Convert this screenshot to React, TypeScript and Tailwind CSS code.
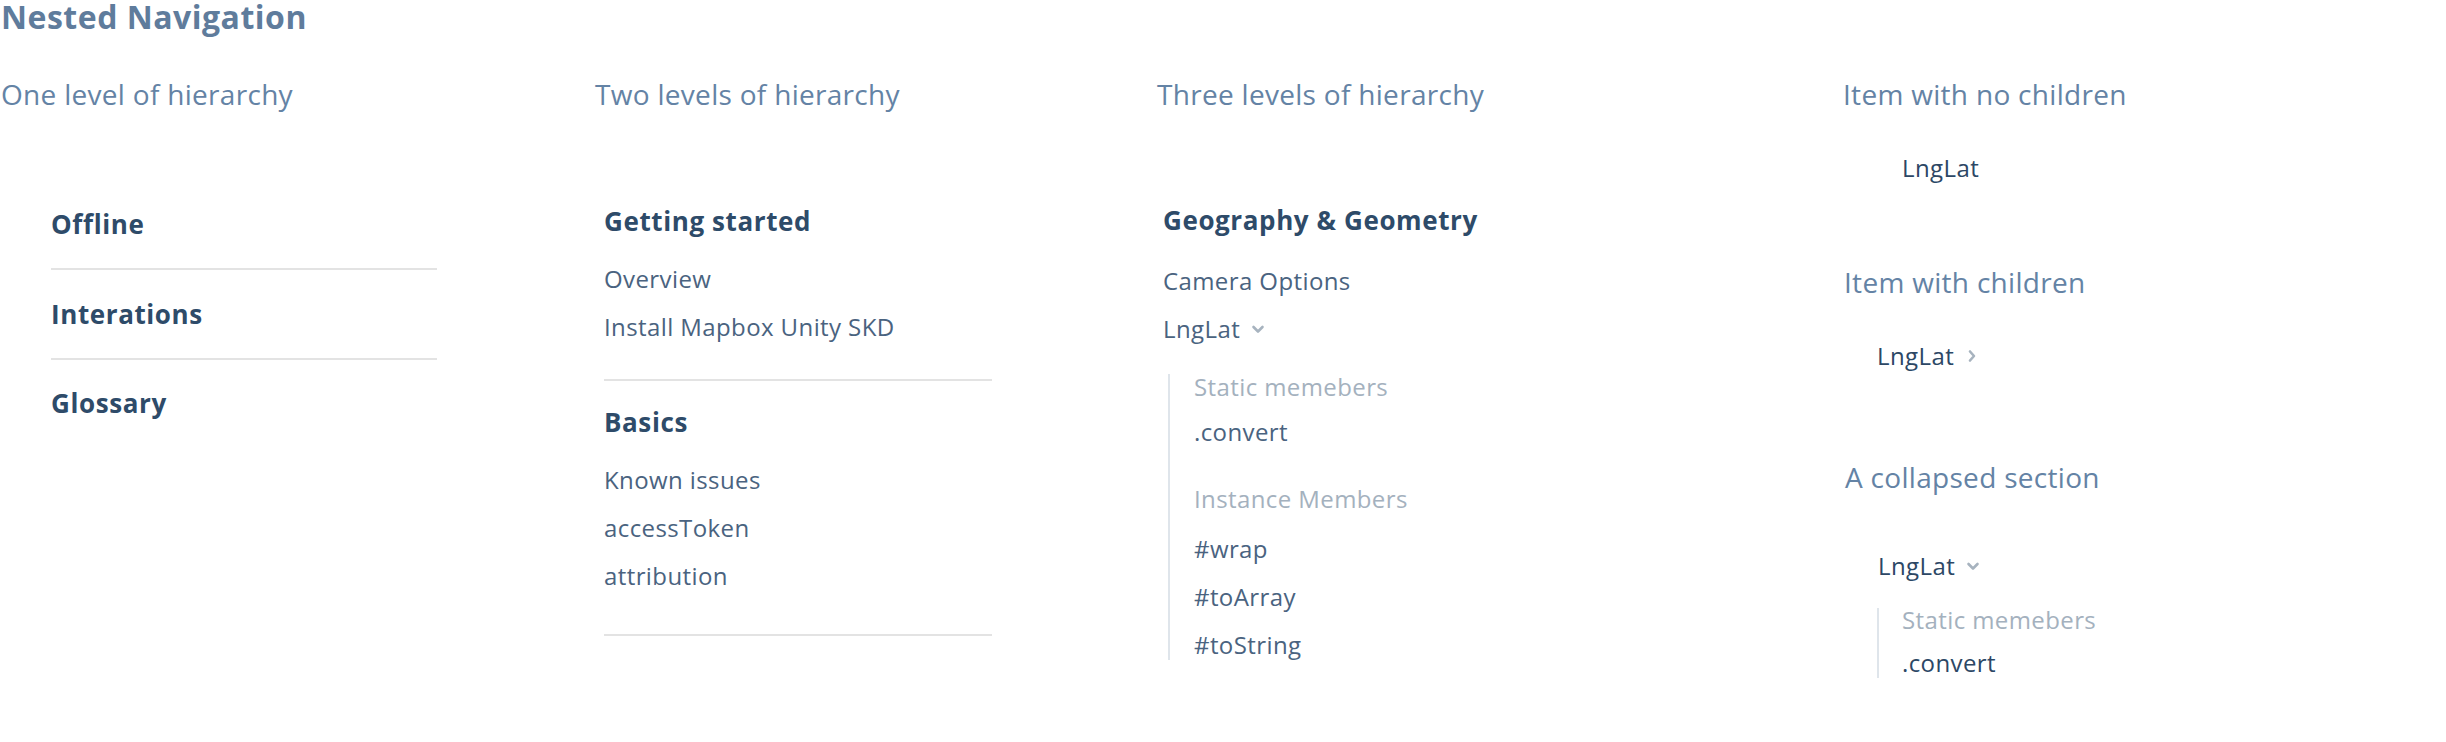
import React from "react";

function ChevronDown() {
  return (
    <svg width="16" height="16" viewBox="0 0 16 16" className="text-[#a7b3bf]">
      <polyline points="3.5,6 8,10.5 12.5,6" fill="none" stroke="currentColor" strokeWidth="2.6" strokeLinecap="round" strokeLinejoin="round" />
    </svg>
  );
}

function ChevronRight() {
  return (
    <svg width="12" height="16" viewBox="0 0 12 16" className="text-[#a7b3bf]">
      <polyline points="4,3.5 8,8 4,12.5" fill="none" stroke="currentColor" strokeWidth="2.6" strokeLinecap="round" strokeLinejoin="round" />
    </svg>
  );
}

function Subtitle({ children, className = "" }: { children: React.ReactNode; className?: string }) {
  return (
    <div className={`h-[28px] text-[28px] leading-[28px] tracking-[0.3px] text-[#6483a5] whitespace-nowrap ${className}`}>
      {children}
    </div>
  );
}

const heading = "h-[27px] text-[26px] leading-[27px] tracking-[0.6px] font-bold text-[#2e4b69] whitespace-nowrap";
const item = "h-[48px] flex items-center text-[24px] tracking-[0.4px] text-[#4a6380] whitespace-nowrap";
const sub = "h-[30px] flex items-center text-[24px] tracking-[0.4px] text-[#4a6380] whitespace-nowrap";
const muted = "flex items-center text-[24px] tracking-[0.4px] text-[#a4b1be] whitespace-nowrap";
const dark = "h-[30px] flex items-center text-[24px] tracking-[0.4px] text-[#2c4765] whitespace-nowrap";

export default function App() {
  return (
    <div className="w-[2446px] h-[742px] bg-white font-['Open_Sans',sans-serif] overflow-hidden">
      <h1 className="pt-[1px] pl-[1px] text-[32px] leading-[32px] tracking-[0.5px] font-bold text-[#5f7c9c] whitespace-nowrap">
        Nested Navigation
      </h1>

      <div className="mt-[47px] grid grid-cols-[595px_562px_684px_1fr]">
        {/* One level */}
        <div>
          <Subtitle className="pl-[1px]">One level of hierarchy</Subtitle>
          <div className="mt-[72px] ml-[51px] w-[386px] flex flex-col">
            <div className="h-[90px] flex items-center border-b-2 border-[#e3e3e3]">
              <span className={heading}>Offline</span>
            </div>
            <div className="h-[90px] flex items-center border-b-2 border-[#e3e3e3]">
              <span className={heading}>Interations</span>
            </div>
            <div className="h-[86px] flex items-center">
              <span className={heading}>Glossary</span>
            </div>
          </div>
        </div>

        {/* Two levels */}
        <div>
          <Subtitle>Two levels of hierarchy</Subtitle>
          <div className="mt-[72px] ml-[9px] w-[388px] flex flex-col">
            <div className="pt-[28px] pb-[28px] border-b-2 border-[#e3e3e3]">
              <div className={heading}>Getting started</div>
              <div className="mt-[20px] flex flex-col">
                <div className={item}>Overview</div>
                <div className={item}>Install Mapbox Unity SKD</div>
              </div>
            </div>
            <div className="pt-[28px] pb-[34px] border-b-2 border-[#e3e3e3]">
              <div className={heading}>Basics</div>
              <div className="mt-[20px] flex flex-col">
                <div className={item}>Known issues</div>
                <div className={item}>accessToken</div>
                <div className={item}>attribution</div>
              </div>
            </div>
          </div>
        </div>

        {/* Three levels */}
        <div>
          <Subtitle>Three levels of hierarchy</Subtitle>
          <div className="mt-[99px] pl-[6px] flex flex-col">
            <div className={heading}>Geography &amp; Geometry</div>
            <div className="mt-[23px] flex flex-col">
              <div className={item}>Camera Options</div>
              <div className={`${item} gap-[10px]`}>
                <span>LngLat</span>
                <ChevronDown />
              </div>
            </div>
            <div className="mt-[21px] ml-[5px] border-l-2 border-[#dfe5eb] pl-[24px] flex flex-col">
              <div className={`${muted} h-[26px]`}>Static memebers</div>
              <div className={`${sub} mt-[17px]`}>.convert</div>
              <div className={`${muted} h-[26px] mt-[39px]`}>Instance Members</div>
              <div className={`${sub} mt-[22px]`}>#wrap</div>
              <div className={`${sub} mt-[18px]`}>#toArray</div>
              <div className={`${sub} mt-[18px]`}>#toString</div>
            </div>
          </div>
        </div>

        {/* States */}
        <div className="flex flex-col">
          <Subtitle className="pl-[2px]">Item with no children</Subtitle>
          <div className={`${dark} mt-[45px] pl-[61px]`}>LngLat</div>

          <Subtitle className="mt-[85px] pl-[3px]">Item with children</Subtitle>
          <div className={`${dark} mt-[45px] pl-[36px] gap-[12px]`}>
            <span>LngLat</span>
            <ChevronRight />
          </div>

          <Subtitle className="mt-[92px] pl-[4px]">A collapsed section</Subtitle>
          <div className={`${dark} mt-[60px] pl-[37px] gap-[10px]`}>
            <span>LngLat</span>
            <ChevronDown />
          </div>
          <div className="mt-[27px] ml-[36px] border-l-2 border-[#dfe5eb] pl-[23px] flex flex-col">
            <div className={`${muted} h-[24px]`}>Static memebers</div>
            <div className={`${dark} mt-[16px]`}>.convert</div>
          </div>
        </div>
      </div>
    </div>
  );
}
